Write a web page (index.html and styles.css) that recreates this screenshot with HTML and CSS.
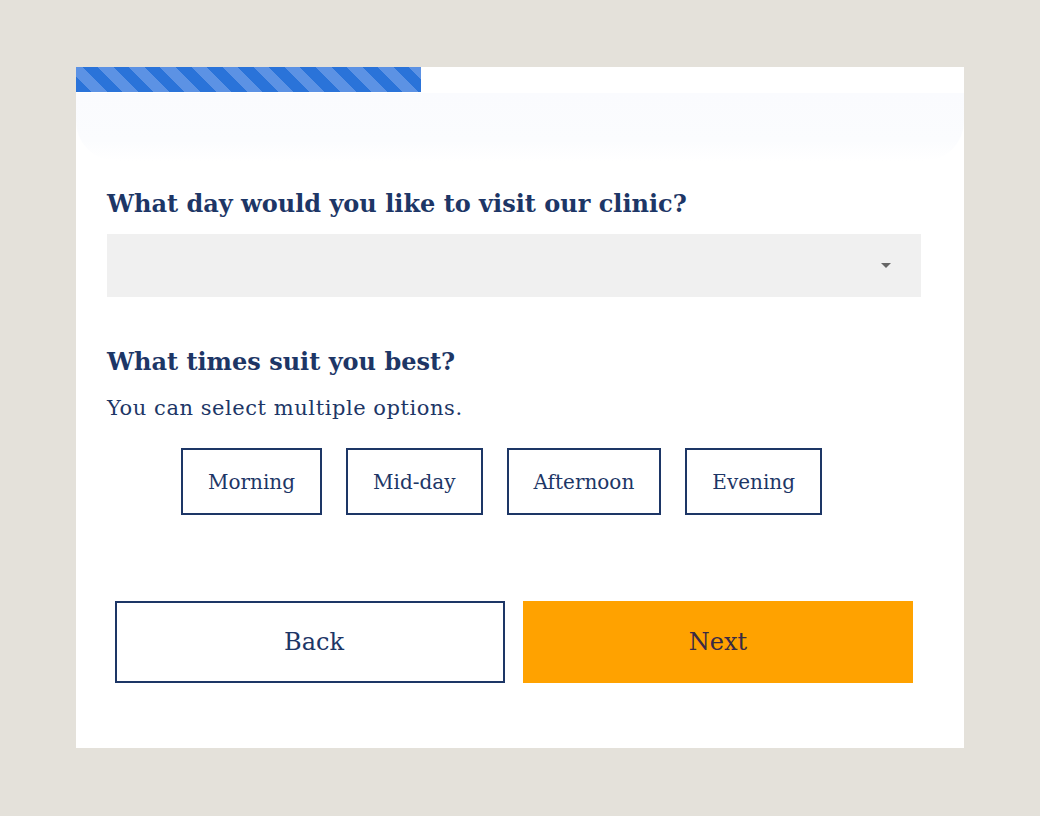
FILE: index.html
```html
<!DOCTYPE html>
<html lang="en">
<head>
    <meta charset="UTF-8">
    <meta name="viewport" content="width=device-width, initial-scale=1.0">
    <title>Book a visit</title>
    <link rel="stylesheet" href="styles.css">
</head>
<body>
    <div class="card">
        <div class="progress"><div class="progress-bar"></div></div>
        <div class="glow"></div>

        <form class="form">
            <div class="field">
                <h2 class="question">What day would you like to visit our clinic?</h2>
                <div class="select">
                    <span class="caret"></span>
                </div>
            </div>

            <div class="field">
                <h2 class="question">What times suit you best?</h2>
                <p class="hint">You can select multiple options.</p>
                <div class="chips">
                    <button type="button" class="chip">Morning</button>
                    <button type="button" class="chip">Mid-day</button>
                    <button type="button" class="chip">Afternoon</button>
                    <button type="button" class="chip">Evening</button>
                </div>
            </div>

            <div class="actions">
                <button type="button" class="btn btn-back">Back</button>
                <button type="button" class="btn btn-next">Next</button>
            </div>
        </form>
    </div>
</body>
</html>
```

FILE: styles.css
```css
* { margin: 0; padding: 0; box-sizing: border-box; }
body { background: #e4e1da; font-family: "DejaVu Serif", "Liberation Serif", serif; color: #1d3666; padding: 67px 76px; }
.card { background: #fff; width: 888px; height: 681px; }
.progress { height: 25px; }
.progress-bar { width: 345px; height: 25px; background: repeating-linear-gradient(45deg, #2a73d9 0 11px, #5c92e4 11px 22px); }
.glow { height: 68px; margin: 1px 0 0; background: linear-gradient(#fafbfe, #fbfcfe 70%, #fff); border-radius: 0 0 40px 40px; }
.form { padding: 27px 43px 0 31px; }
.question { font-size: 24px; font-weight: bold; line-height: 32px; color: #1d3666; }
.select { margin-top: 14px; height: 63px; background: #f0f0f0; display: flex; align-items: center; justify-content: flex-end; padding-right: 30px; }
.caret { width: 0; height: 0; border-left: 5px solid transparent; border-right: 5px solid transparent; border-top: 5px solid #666; }
.field + .field { margin-top: 49px; }
.hint { font-size: 21px; margin-top: 16px; line-height: 28px; letter-spacing: 0.55px; }
.chips { display: flex; justify-content: center; gap: 24px; margin-top: 26px; padding-right: 25px; }
.chip { font-family: inherit; font-size: 20px; color: #1d3666; background: #fff; border: 2px solid #1d3666; height: 67px; padding: 0 25px; }
.actions { display: flex; gap: 18px; margin-top: 86px; padding: 0 8px; }
.btn { flex: 1; height: 82px; font-family: inherit; font-size: 24px; border: 2px solid #1d3666; background: #fff; color: #1d3666; }
.btn-back { text-indent: 8px; }
.btn-next { background: #ffa200; border-color: #ffa200; color: #3a2a44; }
```
